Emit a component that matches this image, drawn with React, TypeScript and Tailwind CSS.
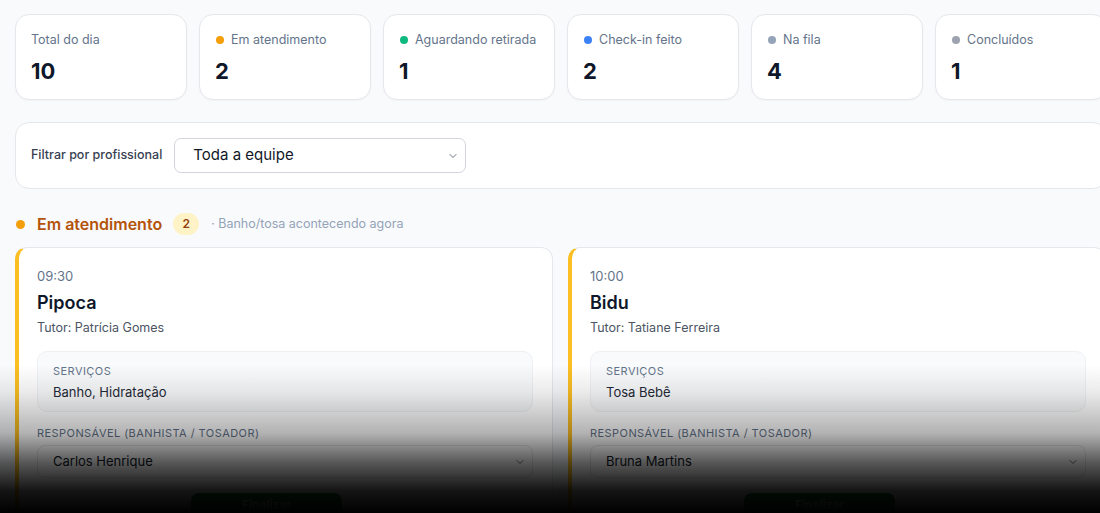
import { ChevronDown } from 'lucide-react'

const font = { fontFamily: 'Inter, "Noto Sans", "Liberation Sans", sans-serif' }

const stats = [
  { label: 'Total do dia', value: '10', dot: '' },
  { label: 'Em atendimento', value: '2', dot: 'bg-[#f59e0b]' },
  { label: 'Aguardando retirada', value: '1', dot: 'bg-[#10b981]' },
  { label: 'Check-in feito', value: '2', dot: 'bg-[#3b82f6]' },
  { label: 'Na fila', value: '4', dot: 'bg-[#94a3b8]' },
  { label: 'Concluídos', value: '1', dot: 'bg-[#9ca3af]' },
]

const atendimentos = [
  { time: '09:30', pet: 'Pipoca', tutor: 'Patrícia Gomes', services: 'Banho, Hidratação', staff: 'Carlos Henrique' },
  { time: '10:00', pet: 'Bidu', tutor: 'Tatiane Ferreira', services: 'Tosa Bebê', staff: 'Bruna Martins' },
]

function StatCard({ label, value, dot }: { label: string; value: string; dot: string }) {
  return (
    <div className="w-[172px] h-[86px] shrink-0 rounded-[14px] border border-[#e5e7eb] bg-white pl-[15px] pr-2 pt-[16px] shadow-[0_1px_2px_rgba(0,0,0,0.03)]">
      <div className="flex items-center gap-[7px] h-[18px] whitespace-nowrap text-[12.5px] text-[#64748b]">
        {dot && <span className={`ml-[1px] w-[8px] h-[8px] shrink-0 rounded-full ${dot}`} />}
        {label}
      </div>
      <div className="mt-[8px] text-[22px] leading-[28px] font-bold text-[#0f172a]">{value}</div>
    </div>
  )
}

function AtendimentoCard({ a }: { a: (typeof atendimentos)[number] }) {
  return (
    <div className="w-[538px] shrink-0 rounded-[12px] border border-[#e5e7eb] border-l-[4px] border-l-[#fbbf24] bg-white pl-[18px] pr-[19px] pt-[19px] pb-6">
      <div className="text-[13px] leading-[18px] text-[#64748b]">{a.time}</div>
      <div className="mt-[5px] text-[18px] leading-[26px] font-semibold text-[#0f172a]">{a.pet}</div>
      <div className="mt-[3px] text-[12.5px] leading-[18px] text-[#4b5563]">Tutor: {a.tutor}</div>
      <div className="mt-[14px] h-[61px] rounded-[10px] border border-[#eef0f3] bg-[#f9fafb] px-[15px] pt-[12px]">
        <div className="text-[11px] leading-[14px] tracking-[0.04em] uppercase text-[#64748b]">Serviços</div>
        <div className="mt-[5px] text-[13px] leading-[18px] text-[#1f2937]">{a.services}</div>
      </div>
      <div className="mt-[14px] text-[11px] leading-[14px] tracking-[0.04em] uppercase text-[#64748b]">
        Responsável (banhista / tosador)
      </div>
      <div className="mt-[5px] h-[33px] rounded-[8px] border border-[#e5e7eb] bg-white flex items-center justify-between pl-[15px] pr-[6px]">
        <span className="text-[13px] text-[#111827]">{a.staff}</span>
        <ChevronDown size={12} strokeWidth={2} className="text-[#6b7280]" />
      </div>
      <div className="mt-[15px] flex">
        <button type="button" className="ml-[154px] w-[151px] h-[24px] rounded-t-[8px] bg-[#15803d] text-white text-[12px] leading-[16px] font-semibold">
          Finalizar
        </button>
      </div>
    </div>
  )
}

export default function App() {
  return (
    <div className="relative w-[1100px] h-[513px] overflow-hidden bg-[#f8fafc]" style={font}>
      <div className="pl-[15px] pt-[14px]">
        <div className="flex gap-3">
          {stats.map((s) => (
            <StatCard key={s.label} {...s} />
          ))}
        </div>

        <div className="mt-[22px] w-[1092px] h-[67px] rounded-[14px] border border-[#e5e7eb] bg-white flex items-center pl-[15px] gap-3">
          <span className="text-[12.5px] font-medium text-[#374151]">Filtrar por profissional</span>
          <div className="w-[292px] h-[35px] rounded-[7px] border border-[#d1d5db] bg-white flex items-center justify-between pl-[18px] pr-[6px]">
            <span className="text-[15px] text-[#111827]">Toda a equipe</span>
            <ChevronDown size={12} strokeWidth={2} className="text-[#6b7280]" />
          </div>
        </div>

        <div className="mt-[23px] h-[24px] flex items-center">
          <span className="ml-[1px] w-[9px] h-[9px] rounded-full bg-[#f59e0b]" />
          <span className="ml-[12px] text-[16px] font-semibold text-[#b45309]">Em atendimento</span>
          <span className="ml-[11px] h-[22px] w-[26px] rounded-full bg-[#fef3c7] flex items-center justify-center text-[12px] font-semibold text-[#92400e]">
            2
          </span>
          <span className="ml-[12px] text-[12.5px] text-[#94a3b8]">· Banho/tosa acontecendo agora</span>
        </div>

        <div className="mt-[11px] flex gap-[15px]">
          {atendimentos.map((a) => (
            <AtendimentoCard key={a.pet} a={a} />
          ))}
        </div>
      </div>

      <div className="pointer-events-none absolute left-0 right-0 bottom-0 h-[148px] bg-[linear-gradient(to_bottom,rgba(0,0,0,0)_0%,rgba(0,0,0,0.08)_18%,rgba(0,0,0,0.3)_46%,rgba(0,0,0,0.66)_66%,rgba(0,0,0,0.92)_85%,#000_100%)]" />
    </div>
  )
}
